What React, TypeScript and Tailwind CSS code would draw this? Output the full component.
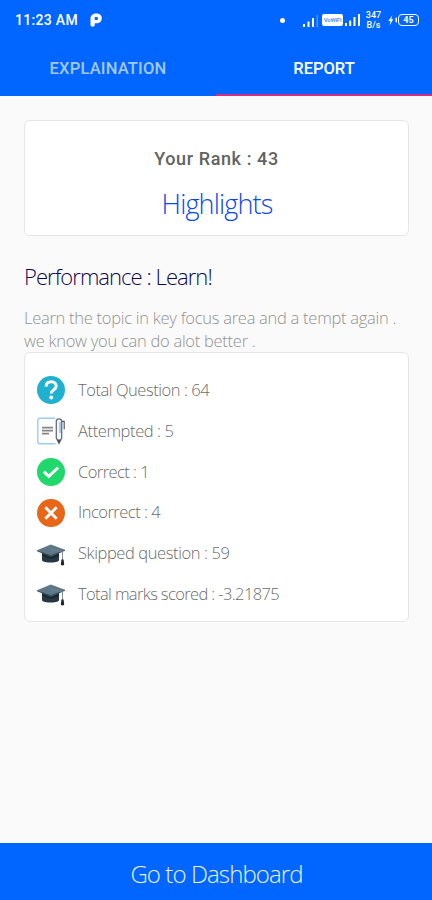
import React from 'react';

const QuestionIcon = () => (
  <svg viewBox="0 0 28 28" className="w-7 h-7">
    <circle cx="14" cy="14" r="14" fill="#1fb1cf" />
    <path d="M9 10.600c.2-3 2.200-4.800 5.200-4.800 2.900 0 5 1.700 5 4.300 0 3.700-4.900 3.500-4.900 7.300" fill="none" stroke="#fff" strokeWidth="3" />
    <circle cx="14.200" cy="21.500" r="1.900" fill="#fff" />
  </svg>
);

const AttemptedIcon = () => (
  <svg viewBox="0 0 28 28" className="w-7 h-7" fill="none">
    <path d="M18 1.200H3A2.200 2.200 0 0 0 .8 3.400v21.200a2.200 2.200 0 0 0 2.200 2.200h15.500" stroke="#9ccbfa" strokeWidth="1.400" />
    <path d="M5 10.700h11M5 13.700h11M5 16.700h7" stroke="#858585" strokeWidth="1.800" />
    <path d="M19.300 4.500a2.700 2.700 0 0 1 5.400 0v16.500L22 26.400 19.300 21z" fill="#f3f6fa" stroke="#686d75" strokeWidth="1.300" />
    <path d="M23 5v11" stroke="#8ebcf0" strokeWidth="1.500" />
    <path d="M20.300 22.500h3.400L22 26.500z" fill="#44484e" />
    <path d="M24.700 4.300h2.500v8" stroke="#55595f" strokeWidth="1.200" />
  </svg>
);

const CorrectIcon = () => (
  <svg viewBox="0 0 28 28" className="w-7 h-7">
    <circle cx="14" cy="14" r="14" fill="#20d86b" />
    <path d="M6.800 13.600l5 4.800 9.400-8.900" fill="none" stroke="#fff" strokeWidth="2.900" />
  </svg>
);

const IncorrectIcon = () => (
  <svg viewBox="0 0 28 28" className="w-7 h-7">
    <circle cx="14" cy="14" r="14" fill="#e96518" />
    <path d="M8.300 8.300l11.400 11.400M19.700 8.300L8.300 19.700" fill="none" stroke="#fff" strokeWidth="2.900" />
  </svg>
);

const CapIcon = () => (
  <svg viewBox="0 0 28 28" className="w-7 h-7">
    <path d="M5 12.500v8c2 2.800 15 2.800 17 0v-8z" fill="#263843" />
    <path d="M5 12.500v3.200l8.800 3.300 8.200-3v-3.500z" fill="#1b2830" />
    <path d="M0 10.200L13.800 4.500 28 9.800l-14.200 6.700z" fill="#5d7888" />
    <path d="M0 10.200l13.800 5.100L28 9.800v1l-14.200 6.200L0 11.200z" fill="#3a505d" />
    <path d="M14 9.500l11.500 2.200v8.500" fill="none" stroke="#75858e" strokeWidth=".9" />
    <path d="M24.400 19.500h2.200l.6 5.200c-1 1.100-2.500 1.100-3.400 0z" fill="#1d2529" />
  </svg>
);

const stats = [
  { icon: <QuestionIcon />, label: 'Total Question : 64', spacing: 'tracking-[-0.45px]' },
  { icon: <AttemptedIcon />, label: 'Attempted : 5', spacing: 'tracking-[-0.4px]' },
  { icon: <CorrectIcon />, label: 'Correct : 1', spacing: 'tracking-[-0.55px]' },
  { icon: <IncorrectIcon />, label: 'Incorrect : 4', spacing: 'tracking-[-0.5px]' },
  { icon: <CapIcon />, label: 'Skipped question : 59', spacing: 'tracking-[-0.4px]' },
  { icon: <CapIcon />, label: 'Total marks scored : -3.21875', spacing: 'tracking-[-0.62px]' },
];

function StatusBar() {
  return (
    <div className="h-10 pl-[15px] pr-[13px] flex items-center text-white">
      <span className="w-[75px] text-[14px] leading-none font-medium tracking-[0.3px] whitespace-nowrap">11:23 AM</span>
      <svg viewBox="0 0 12 14" className="w-3 h-3.5 shrink-0" fill="#fff">
        <path fillRule="evenodd" d="M.5 5.500C.5 2.500 3 .5 6.300.5c3.400 0 5.500 1.900 5.500 4.700 0 3-2.200 5-5.300 5H4.800v1.600c0 1.200-.8 1.900-2.200 1.900-1.300 0-2.100-.7-2.100-1.900zM4.800 4v3h1.400c1.100 0 1.800-.6 1.800-1.600S7.300 4 6.200 4z" />
      </svg>
      <div className="flex-1" />
      <span className="w-[5px] h-[5px] rounded-full bg-white mr-[18px]" />
      <svg viewBox="0 0 16 12" className="w-4 h-3 mt-[2px]" fill="#fff">
        <rect x="0" y="9" width="2" height="3" />
        <rect x="4.500" y="6.500" width="2" height="5.500" />
        <rect x="9" y="3" width="2" height="9" />
        <rect x="13.500" y="0" width="1.500" height="12" opacity=".3" />
      </svg>
      <span className="ml-[3px] w-[21px] h-3 rounded-[2px] bg-white text-[#5b97ff] text-[6px] leading-3 font-bold text-center tracking-[-0.2px]">VoWiFi</span>
      <svg viewBox="0 0 16 12" className="w-4 h-3 ml-[2px]" fill="#fff">
        <rect x="0" y="9" width="2" height="3" />
        <rect x="4.200" y="6.500" width="2" height="5.500" />
        <rect x="8.500" y="3" width="2" height="9" />
        <rect x="13" y="0" width="2" height="12" />
      </svg>
      <div className="ml-[4px] w-[17px] flex flex-col items-center text-[9px] leading-[10px] font-medium">
        <span>347</span>
        <span>B/s</span>
      </div>
      <svg viewBox="0 0 10 12" className="w-2.5 h-3 ml-[6px]" fill="#fff">
        <path d="M4.500 1L.3 7h2.200L1.500 11.500 5.300 5.300H3.200z" />
        <rect x="7.500" y="3.500" width="1.500" height="5" rx=".7" />
      </svg>
      <span className="w-[21px] h-3 rounded-[4px] border border-white text-[9px] leading-[10px] font-bold text-center">45</span>
    </div>
  );
}

export default function App() {
  return (
    <div className="w-[432px] h-[900px] flex flex-col bg-[#fafafa] font-['Open_Sans','Noto_Sans',sans-serif] font-light overflow-hidden">
      {/* Header */}
      <header className="h-24 shrink-0 bg-[#0066ff] font-[Roboto,sans-serif]">
        <StatusBar />
        <nav className="h-14 grid grid-cols-2 text-[16.5px] font-medium text-center">
          <button className="text-[#a4c8ff] tracking-[0.2px] pt-[2px]">EXPLAINATION</button>
          <button className="text-white border-b-2 border-[#d12d82] pt-1">REPORT</button>
        </nav>
      </header>

      <main className="flex-1 px-6 pt-6 flex flex-col">
        {/* Rank card */}
        <section className="h-[116px] shrink-0 mr-[-1px] bg-white border-[1.5px] border-[#e6e6e6] rounded-md flex flex-col items-center pt-[26px]">
          <span className="font-[Roboto,sans-serif] font-medium text-[18px] leading-6 text-[#626262] tracking-[0.6px]">Your Rank : 43</span>
          <span className="mt-[15px] pl-px text-[27px] leading-9 text-[#0a48f0] tracking-[-0.85px]">Highlights</span>
        </section>

        <h2 className="mt-6 text-[22px] leading-8 font-light text-[#0c0850] tracking-[-0.95px]">Performance : Learn!</h2>
        <p className="mt-3.5 mb-px text-[16.5px] leading-[23px] text-[#929292] tracking-[-0.27px] whitespace-nowrap">
          Learn the topic in key focus area and a tempt again .<br />
          we know you can do alot better .
        </p>

        {/* Stats card */}
        <section className="h-[270px] shrink-0 mr-[-1px] mt-[-1px] bg-white border-[1.5px] border-[#e6e6e6] rounded-md pl-3 pt-[17px]">
          {stats.map((stat) => (
            <div key={stat.label} className="h-[40.8px] flex items-center gap-[13px]">
              {stat.icon}
              <span className={`text-[16.5px] text-[#6c6c6c] whitespace-nowrap ${stat.spacing}`}>{stat.label}</span>
            </div>
          ))}
        </section>
      </main>

      <button className="h-[57px] shrink-0 bg-[#0066ff] text-[#e8f1ff] text-[24px] font-light pt-1 pl-px tracking-[-0.9px]">
        Go to Dashboard
      </button>
    </div>
  );
}
